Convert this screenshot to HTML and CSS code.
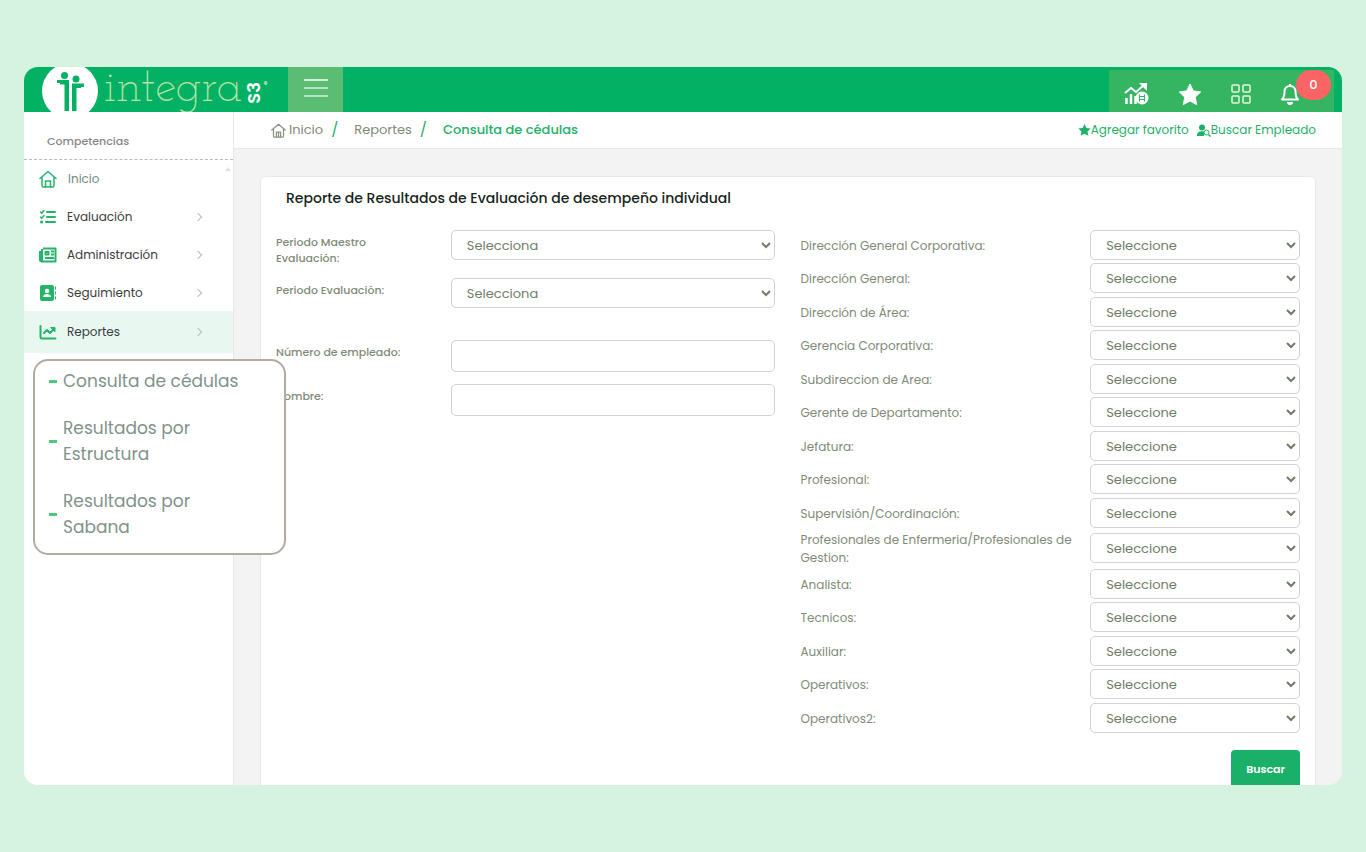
FILE: index.html
```html
<!DOCTYPE html>
<html lang="es">
<head>
    <meta charset="UTF-8">
    <meta name="viewport" content="width=device-width, initial-scale=1.0">
    <title>Integra S3 - Consulta de cédulas</title>
    <link rel="stylesheet" href="styles.css">
</head>
<body>
    <div class="app">
        <header class="topbar">
            <a class="logo" href="#" aria-label="integra S3">
                <svg class="logo-icon" width="58" height="45" viewBox="0 0 58 45">
                    <circle cx="29" cy="24" r="28" fill="#fff"/>
                    <g fill="#02b163">
                        <circle cx="23.500" cy="8.500" r="3.500"/>
                        <circle cx="35" cy="12" r="3.500"/>
                        <path d="M16 13h12v31h-4.500V17.500H19V16h-3z"/>
                        <path d="M31 16.500h12V20h-3v1h-4.500v23H31z"/>
                    </g>
                </svg>
                <span class="logo-text">integra</span>
                <span class="logo-s3">S3</span>
                <span class="logo-reg">®</span>
            </a>
            <button class="menu-btn" type="button" aria-label="Menú">
                <svg width="24" height="20" viewBox="0 0 24 20" stroke="#fff" stroke-width="1.5"><path d="M0 2h24"/><path d="M0 10h24M0 18h24" opacity=".75"/></svg>
            </button>
            <nav class="top-actions">
                <a href="#" aria-label="Indicadores">
                    <svg width="25" height="22" viewBox="0 0 25 22" fill="none" stroke="#fff">
                        <path d="M1 10l6-5 5 4 8-7" stroke-width="2"/>
                        <path d="M15 0h8v8z" fill="#fff" stroke="none"/>
                        <path d="M2.500 21v-6M7 21V11M11.500 21v-8" stroke-width="2.500"/>
                        <circle cx="18" cy="15" r="6.500" fill="#fff" stroke="none"/>
                        <path d="M15.500 11.500v7M20.500 11.500v7M15 13.500h6M15 16.500h6" stroke="#35b561"/>
                    </svg>
                </a>
                <a href="#" aria-label="Favoritos">
                    <svg width="24" height="23" viewBox="0 0 24 23" fill="#fff" stroke="#fff" stroke-linejoin="round"><path d="M12 1l3.300 6.900 7.400 1-5.400 5.200 1.300 7.500-6.600-3.600-6.600 3.600 1.300-7.500L1.300 8.900l7.400-1z"/></svg>
                </a>
                <a href="#" aria-label="Aplicaciones">
                    <svg width="20" height="20" viewBox="0 0 20 20" fill="none" stroke="#e6f7d8" stroke-width="1.500"><rect x="1" y="1" width="7" height="7" rx="1"/><rect x="12" y="1" width="7" height="7" rx="1"/><rect x="1" y="12" width="7" height="7" rx="1"/><rect x="12" y="12" width="7" height="7" rx="1"/></svg>
                </a>
                <a class="bell" href="#" aria-label="Notificaciones">
                    <svg width="20" height="22" viewBox="0 0 20 22" fill="none" stroke="#fff" stroke-width="2" stroke-linejoin="round"><path d="M2 16.500c2-2 2.500-4 2.500-8C4.500 5 7 3 10 3s5.500 2 5.500 5.500c0 4 .5 6 2.500 8z"/><path d="M10 1v2"/><path d="M7 19h6a3 3 0 0 1-6 0z" fill="#fff" stroke="none"/></svg>
                    <span class="badge">0</span>
                </a>
            </nav>
        </header>

        <div class="body">
            <aside class="sidebar">
                <div class="sidebar-title">Competencias</div>
                <nav class="side-menu">
                    <a class="inicio" href="#">
                        <svg width="18" height="18" viewBox="0 0 18 18" fill="none" stroke="#23b468" stroke-width="1.500" stroke-linecap="round" stroke-linejoin="round"><path d="M1 8.500L9 1.500l8 7M3 7v8.500c0 .8.500 1.500 1.500 1.500h9c1 0 1.500-.7 1.500-1.500V7"/><path d="M6.500 17v-6h5v6"/></svg>
                        <span>Inicio</span>
                    </a>
                    <a href="#">
                        <svg width="18" height="18" viewBox="0 0 18 18" fill="none" stroke="#23b468" stroke-width="2" stroke-linecap="round"><path d="M8 4h8M8 9h8M7 14h9"/><path d="M1.500 4l1.200 1.200L5 2.500M1.500 9l1.200 1.200L5 7.500" stroke-width="1.500"/><path d="M2.500 14h.1" stroke-width="3"/></svg>
                        <span>Evaluación</span><i class="arrow"></i>
                    </a>
                    <a href="#">
                        <svg width="18" height="18" viewBox="0 0 18 18" fill="none" stroke="#23b468" stroke-width="2" stroke-linejoin="round"><path d="M4 2.500h12.500v13H3V3M1 5v9.500l2 1"/><path d="M6.500 6h3v2.500h-3zM12 5.500h3M12 8.500h3M6 12h9"/></svg>
                        <span>Administración</span><i class="arrow"></i>
                    </a>
                    <a href="#">
                        <svg width="18" height="18" viewBox="0 0 18 18"><rect x="1" y="1" width="14" height="16" rx="2" fill="#23b468"/><circle cx="8" cy="7" r="2.200" fill="#fff"/><path d="M4 13c0-4 8-4 8 0z" fill="#fff"/><path d="M16.500 2.500v3M16.500 7.500v3M16.500 12.500v3" stroke="#23b468"/></svg>
                        <span>Seguimiento</span><i class="arrow"></i>
                    </a>
                    <a class="active" href="#">
                        <svg width="18" height="18" viewBox="0 0 18 18" fill="none" stroke="#23b468" stroke-width="2" stroke-linecap="round" stroke-linejoin="round"><path d="M1.500 3v11c0 1 .5 1.500 1.500 1.500h13.500"/><path d="M5 10l3-3 3 3 4-4"/><path d="M12 4.500h4v4z" fill="#23b468" stroke-width="1"/></svg>
                        <span>Reportes</span><i class="arrow"></i>
                    </a>
                </nav>
                <span class="scroll-up"></span>
            </aside>

            <main class="content">
                <div class="crumbs">
                    <nav class="breadcrumb">
                        <a href="#"><svg width="15" height="15" viewBox="0 0 18 18" fill="none" stroke="#8a9484" stroke-width="1.500" stroke-linecap="round" stroke-linejoin="round"><path d="M1 8.500L9 1.500l8 7M3 7v8.500c0 .8.500 1.500 1.500 1.500h9c1 0 1.500-.7 1.500-1.500V7"/><path d="M6.500 17v-6h5v6M9 11v6"/></svg> Inicio</a>
                        <span class="sep">/</span>
                        <a href="#">Reportes</a>
                        <span class="sep">/</span>
                        <span class="current">Consulta de cédulas</span>
                    </nav>
                    <div class="tools">
                        <a href="#"><svg width="13" height="12" viewBox="0 0 24 23" fill="#1eb068"><path d="M12 0l3.600 7.500 8.200 1.100-6 5.700 1.500 8.200-7.300-4-7.300 4 1.500-8.200-6-5.700 8.200-1.100z"/></svg>Agregar favorito</a>
                        <a href="#"><svg width="14" height="13" viewBox="0 0 14 13" fill="#1eb068"><circle cx="5" cy="3.500" r="3"/><path d="M0 12c0-5 4-5 7-4.500V12z"/><circle cx="9.500" cy="8.500" r="2.500" fill="#fff" stroke="#1eb068"/><path d="M11.500 10.500l2 2" stroke="#1eb068" stroke-width="1.500"/></svg>Buscar Empleado</a>
                    </div>
                </div>

                <section class="panel">
                    <h1>Reporte de Resultados de Evaluación de desempeño individual</h1>
                    <form class="filters">
                        <div class="periods">
                            <div class="field"><label for="maestro">Periodo Maestro Evaluación:</label><select id="maestro"><option>Selecciona</option></select></div>
                            <div class="field"><label for="periodo">Periodo Evaluación:</label><select id="periodo"><option>Selecciona</option></select></div>
                            <div class="field employee"><label for="numero">Número de empleado:</label><input type="text" id="numero"></div>
                            <div class="field"><label for="nombre">Nombre:</label><input type="text" id="nombre"></div>
                        </div>
                        <div class="structure">
                            <div class="level"><label for="n1">Dirección General Corporativa:</label><select id="n1"><option>Seleccione</option></select></div>
                            <div class="level"><label for="n2">Dirección General:</label><select id="n2"><option>Seleccione</option></select></div>
                            <div class="level"><label for="n3">Dirección de Área:</label><select id="n3"><option>Seleccione</option></select></div>
                            <div class="level"><label for="n4">Gerencia Corporativa:</label><select id="n4"><option>Seleccione</option></select></div>
                            <div class="level"><label for="n5">Subdireccion de Area:</label><select id="n5"><option>Seleccione</option></select></div>
                            <div class="level"><label for="n6">Gerente de Departamento:</label><select id="n6"><option>Seleccione</option></select></div>
                            <div class="level"><label for="n7">Jefatura:</label><select id="n7"><option>Seleccione</option></select></div>
                            <div class="level"><label for="n8">Profesional:</label><select id="n8"><option>Seleccione</option></select></div>
                            <div class="level"><label for="n9">Supervisión/Coordinación:</label><select id="n9"><option>Seleccione</option></select></div>
                            <div class="level"><label for="n10">Profesionales de Enfermeria/Profesionales de Gestion:</label><select id="n10"><option>Seleccione</option></select></div>
                            <div class="level"><label for="n11">Analista:</label><select id="n11"><option>Seleccione</option></select></div>
                            <div class="level"><label for="n12">Tecnicos:</label><select id="n12"><option>Seleccione</option></select></div>
                            <div class="level"><label for="n13">Auxiliar:</label><select id="n13"><option>Seleccione</option></select></div>
                            <div class="level"><label for="n14">Operativos:</label><select id="n14"><option>Seleccione</option></select></div>
                            <div class="level"><label for="n15">Operativos2:</label><select id="n15"><option>Seleccione</option></select></div>
                            <button class="search-btn" type="button">Buscar</button>
                        </div>
                    </form>
                </section>
            </main>
        </div>

        <nav class="submenu">
            <a href="#">Consulta de cédulas</a>
            <a href="#">Resultados por Estructura</a>
            <a href="#">Resultados por Sabana</a>
        </nav>
    </div>
</body>
</html>
```
FILE: styles.css
```css
* {
    box-sizing: border-box;
}

body {
    margin: 0;
    padding: 67px 24px;
    background-color: #d6f3e0;
    font-family: Poppins, Inter, sans-serif;
    font-size: 13px;
    color: #7f8b78;
}

a {
    color: inherit;
    text-decoration: none;
}

.app {
    position: relative;
    display: flex;
    flex-direction: column;
    height: calc(100vh - 134px);
    background-color: #f3f3f3;
    border-radius: 14px;
    overflow: hidden;
}

/* Barra superior */
.topbar {
    display: flex;
    height: 45px;
    flex-shrink: 0;
    background-color: #02b163;
}

.logo {
    display: flex;
    width: 264px;
    padding-left: 17px;
    color: #fff;
}

.logo-text {
    margin-left: 5px;
    font-family: "Josefin Slab", "Roboto Slab", Lato, sans-serif;
    font-size: 48px;
    font-weight: 300;
    line-height: 44px;
    color: #b5e3a4;
}

.logo-s3 {
    align-self: center;
    margin: 6px 0 0 3px;
    font-size: 18px;
    font-weight: 600;
    line-height: 18px;
    writing-mode: vertical-rl;
    transform: rotate(180deg);
}

.logo-reg {
    padding-top: 12px;
    font-size: 8px;
}

.menu-btn {
    width: 55px;
    padding: 0;
    border: none;
    background-color: #5bbd73;
    cursor: pointer;
}

.top-actions {
    display: flex;
    align-items: center;
    gap: 29px;
    margin: 3px 8px 0 auto;
    padding: 6px 34px 0 15px;
    background-color: #35b561;
}

.top-actions a,
.top-actions svg {
    display: block;
}

.bell {
    position: relative;
}

.badge {
    position: absolute;
    left: 16px;
    top: -13px;
    width: 35px;
    height: 30px;
    border-radius: 15px;
    background-color: #fb6464;
    color: #fff;
    font-weight: 500;
    line-height: 30px;
    text-align: center;
}

.body {
    display: flex;
    flex: 1;
    min-height: 0;
}

/* Menú lateral */
.sidebar {
    position: relative;
    width: 210px;
    flex-shrink: 0;
    background-color: #fff;
    border-right: 1px solid #e8e8e8;
}

.sidebar-title {
    height: 48px;
    padding: 11px 23px 0;
    border-bottom: 1px dashed #bbb;
    font-size: 11px;
    font-weight: 500;
    line-height: 36px;
    color: #868686;
}

.side-menu a {
    display: flex;
    align-items: center;
    gap: 10px;
    height: 38px;
    padding: 0 32px 0 15px;
    font-size: 12px;
    color: #3c3c3c;
}

.side-menu .inicio {
    gap: 11px;
    color: #75877f;
}

.side-menu .active {
    height: 42px;
    margin-top: -1px;
    background-color: #e8f8f1;
}

.arrow {
    width: 6px;
    height: 6px;
    margin-left: auto;
    border-top: 1px solid #bbb;
    border-right: 1px solid #bbb;
    transform: rotate(45deg);
}

.scroll-up {
    position: absolute;
    top: 55px;
    right: 2px;
    border: 3px solid transparent;
    border-top: none;
    border-bottom: 4px solid #e3e3e3;
}

/* Contenido */
.content {
    flex: 1;
    min-width: 0;
}

.crumbs {
    display: flex;
    justify-content: space-between;
    align-items: center;
    height: 37px;
    padding: 0 26px 0 37px;
    border-bottom: 1px solid #e8e8e8;
    background-color: #fff;
}

.breadcrumb {
    display: flex;
    align-items: center;
}

.breadcrumb a,
.tools a {
    display: flex;
    align-items: center;
}

.breadcrumb svg {
    margin-right: 3px;
}

.sep {
    margin: 0 16px 0 8px;
    font-size: 15px;
    line-height: 20px;
    color: #1eb068;
}

.current {
    font-weight: 500;
    color: #1eb068;
}

.tools {
    display: flex;
    gap: 8px;
    font-size: 12px;
    color: #1eb068;
}

.panel {
    margin: 27px 26px 0;
    padding: 11px 15px 16px;
    border: 1px solid #e8e8e8;
    border-radius: 5px 5px 0 0;
    background-color: #fff;
}

.panel h1 {
    margin: 0 10px 22px;
    font-size: 14px;
    font-weight: 500;
    line-height: 20px;
    color: #17251a;
}

.filters {
    display: grid;
    grid-template-columns: 1fr 1fr;
    align-items: start;
    gap: 25px;
}

.periods {
    display: flex;
    flex-direction: column;
    gap: 12px;
}

.field {
    display: grid;
    grid-template-columns: 35% 65%;
    align-items: start;
}

.field label {
    padding: 4px 40px 0 0;
    font-size: 11px;
    font-weight: 500;
    line-height: 16px;
}

.employee {
    margin-top: 20px;
}

.level {
    display: grid;
    grid-template-columns: 58% 42%;
    align-items: center;
    margin-bottom: 3px;
}

.level:nth-child(even) {
    margin-bottom: 4px;
}

.level label {
    margin: 0 0 -2px;
    font-size: 12px;
    line-height: 18px;
}

select,
input {
    width: 100%;
    height: 30px;
    padding: 0 4px 0 11px;
    border: 1px solid #d2d2d2;
    border-radius: 5px;
    background-color: #fff;
    font-family: inherit;
    font-size: 13px;
    color: #6f7d69;
}

input {
    height: 32px;
}

.search-btn {
    display: block;
    height: 38px;
    margin: 17px 0 0 auto;
    padding: 0 15px;
    border: none;
    border-radius: 4px;
    background-color: #1bb069;
    color: #fff;
    font-family: inherit;
    font-size: 11px;
    font-weight: 600;
    cursor: pointer;
}

/* Submenú de reportes */
.submenu {
    position: absolute;
    left: 9px;
    top: 292px;
    display: flex;
    flex-direction: column;
    gap: 21px;
    width: 253px;
    padding: 7px 30px 13px 14px;
    border: 2px solid #b3ab9f;
    border-radius: 15px;
    background-color: #fff;
    font-size: 17px;
    line-height: 26px;
    color: #81938b;
}

.submenu a {
    display: flex;
    align-items: center;
    gap: 6px;
}

.submenu a:nth-child(n+2) {
    padding-right: 40px;
}

.submenu a::before {
    content: "";
    flex: 0 0 8px;
    height: 3px;
    background-color: #4cca7c;
}
```
